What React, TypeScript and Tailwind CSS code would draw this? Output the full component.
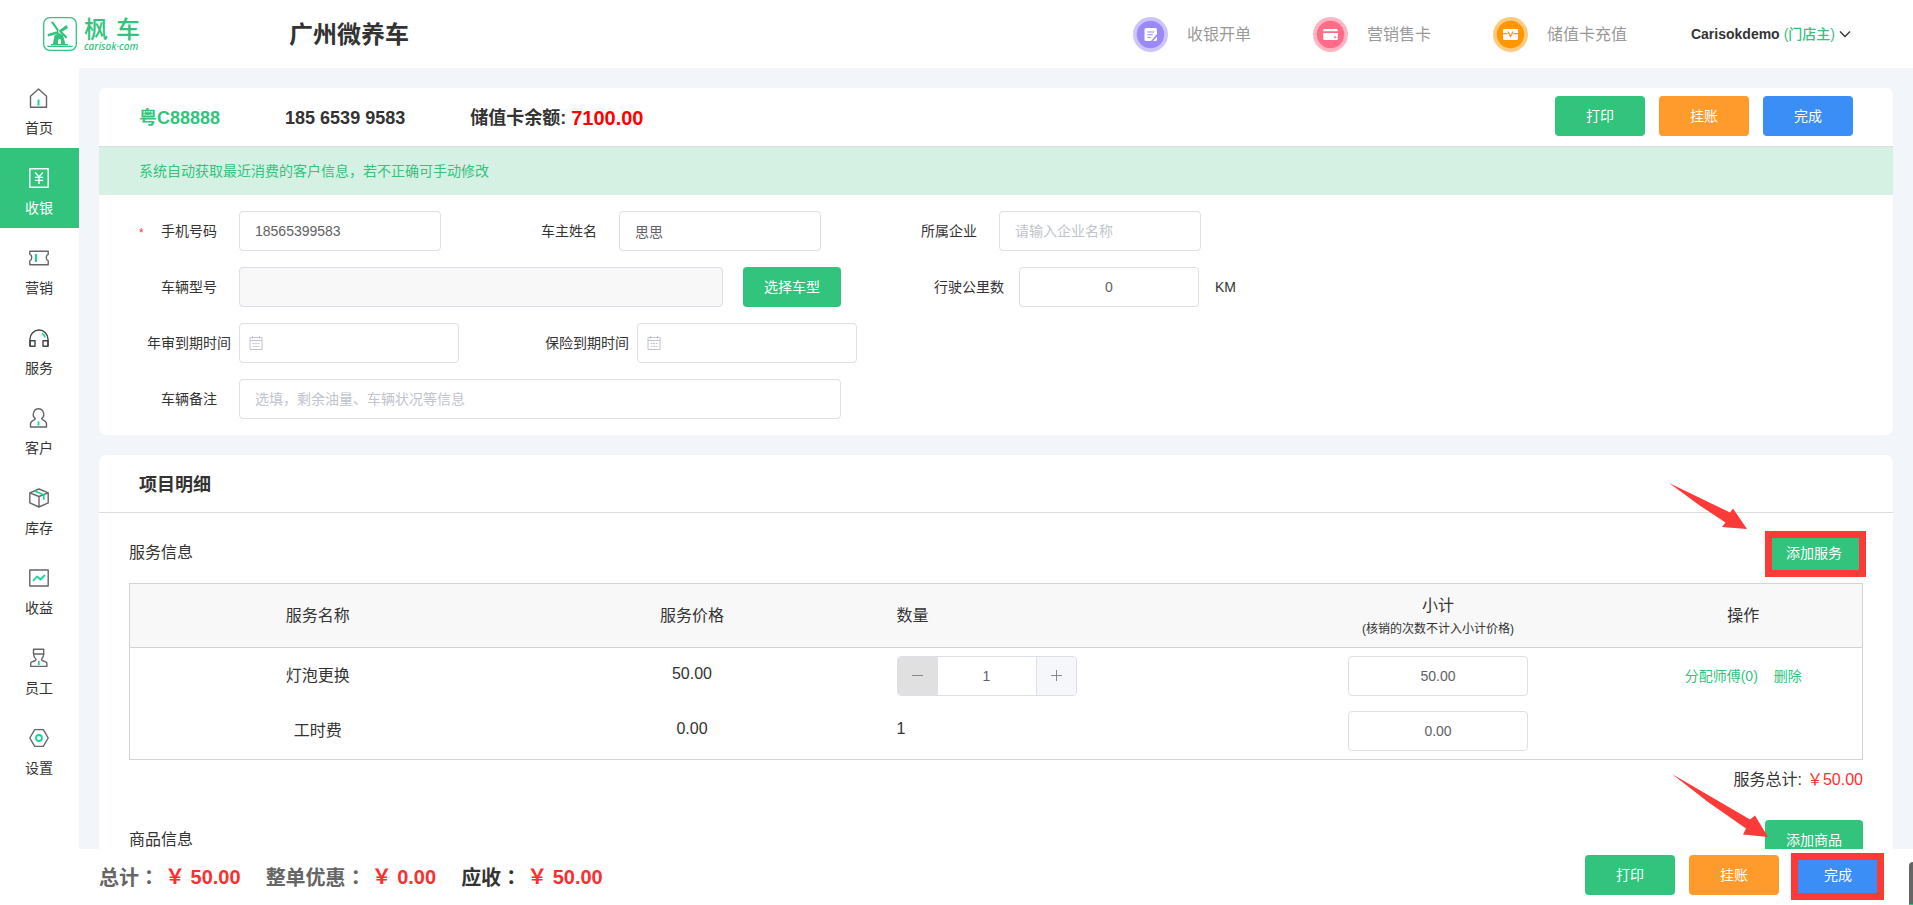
import React from "react";

const sans = "font-['Liberation_Sans','Noto_Sans_CJK_SC',sans-serif]";
const inputBase =
  "h-10 rounded border border-[#dcdfe6] bg-white text-sm text-[#606266] outline-none placeholder:text-[#c0c4cc]";

type IconProps = { children: React.ReactNode; color?: string };

function NavSvg({ children, color = "#666" }: IconProps) {
  return (
    <svg
      viewBox="0 0 20 20"
      className="h-5 w-5"
      fill="none"
      stroke={color}
      strokeWidth="1.4"
      strokeLinejoin="round"
      aria-hidden="true"
    >
      {children}
    </svg>
  );
}

const accent = "#15d59b";

const navItems = [
  {
    label: "首页",
    icon: (
      <NavSvg>
        <path d="M1.500 8.200 9.500.9 17.500 8.200v11h-16z" />
        <path d="M9.500 11.500v6" stroke={accent} strokeWidth="2" />
      </NavSvg>
    ),
  },
  {
    label: "收银",
    active: true,
    icon: (
      <NavSvg color="#fff">
        <rect x=".8" y=".8" width="18.4" height="18.4" />
        <path d="M6.2 4.5 10 9l3.8-4.5M10 9v7M5.8 9.4h8.4M5.8 12.4h8.4" />
      </NavSvg>
    ),
  },
  {
    label: "营销",
    icon: (
      <NavSvg>
        <path d="M.8 3.200h18.400v3.200c-2.600.8-2.600 5.600 0 6.400v4H.8v-4c2.600-.8 2.600-5.600 0-6.400z" />
        <path d="M7 6v8" stroke={accent} strokeWidth="2" />
      </NavSvg>
    ),
  },
  {
    label: "服务",
    icon: (
      <NavSvg color="#444">
        <path d="M1 18.3V11a9 9 0 0 1 18 0v7.3" />
        <path d="M1 12.8h5v5.5H1zM14 12.8h5v5.5h-5z" />
        <path d="M13 5.2c1.700 1 2.700 2.600 3 4.300" stroke={accent} strokeWidth="1.600" />
      </NavSvg>
    ),
  },
  {
    label: "客户",
    icon: (
      <NavSvg>
        <path d="M6.300 10.600C3.900 8.500 4 5.500 5 3.500c1.800-3.600 7.200-3.600 9 0 1 2 1.100 5-1.300 7.100 0 1.800 4.800 1.500 4.800 5.400V19h-16v-3c0-3.900 4.800-3.600 4.800-5.400z" />
        <path d="M9.500 13.500v4" stroke={accent} strokeWidth="1.800" />
      </NavSvg>
    ),
  },
  {
    label: "库存",
    icon: (
      <NavSvg>
        <path d="M10 1 19.200 4.800v10L10 19 .8 14.800v-10zM.8 4.800 10 8.500l9.200-3.700M10 8.500V19" />
        <path d="M5.500 3l9.300 3.800v5" stroke={accent} strokeWidth="1.600" />
      </NavSvg>
    ),
  },
  {
    label: "收益",
    icon: (
      <NavSvg>
        <rect x=".8" y="2" width="18.400" height="16" />
        <path d="M4 13l4-4.500 3.500 3L16 7" stroke={accent} strokeWidth="1.800" />
      </NavSvg>
    ),
  },
  {
    label: "员工",
    icon: (
      <NavSvg>
        <path d="M4.500 1.200h10.200v4.600c0 2-1 4.200-2.200 5.400l.6 1.300 4 1.600c.6.300.8.800.8 1.500v2.800H1.700v-2.800c0-.7.200-1.200.8-1.500l4-1.600.6-1.300C5.500 10 4.500 7.800 4.500 5.800zM4 6h11.500" />
        <path d="M9.800 13v4" stroke={accent} strokeWidth="1.800" />
      </NavSvg>
    ),
  },
  {
    label: "设置",
    icon: (
      <NavSvg>
        <path d="M5.700 1.600h8.600L19.200 10l-4.900 8.400H5.700L.8 10z" />
        <circle cx="10" cy="10" r="3" stroke={accent} strokeWidth="1.800" />
      </NavSvg>
    ),
  },
];

function Logo() {
  return (
    <a href="#" aria-label="枫车 carisok.com" className="flex items-center gap-[7px] text-[#32c37d]">
      <svg viewBox="0 0 34 34" className="h-[34px] w-[34px]" fill="none" stroke="currentColor" aria-hidden="true">
        <rect x=".7" y=".7" width="32.600" height="32.600" rx="6" strokeWidth="1.300" />
        <path
          d="M7.500 4.500 10.500 5 16 13l-1.500 1.500zM16 13.500l7.500-5.500 1.500 3L17 16zM15 14l-10.500 3 .5 2.500L16 16.500zM16 14.500l2-1 6.500 6.500-1.500 1.500z"
          fill="currentColor"
          stroke="none"
        />
        <path
          d="M11.500 18.500l4.500-2.500 4 2 2.500 9.500H18v-4a1.500 1.500 0 0 0-3 0v4H9.800z"
          fill="currentColor"
          stroke="none"
        />
        <path d="M4.500 29.300h25M8 27.700h17" strokeWidth="1.200" />
      </svg>
      <span className="flex flex-col gap-0.5">
        <span className="flex gap-2 font-['Noto_Sans_CJK_SC',sans-serif] text-2xl leading-[22px] font-medium">
          <span>枫</span>
          <span>车</span>
        </span>
        <span className="font-['Noto_Sans',sans-serif] text-[10px] leading-[10px] font-medium italic">carisok·com</span>
      </span>
    </a>
  );
}

function Badge({ fill, ring, children }: { fill: string; ring: string; children: React.ReactNode }) {
  return (
    <svg viewBox="0 0 35 35" className="h-[35px] w-[35px]" aria-hidden="true">
      <circle cx="17.500" cy="17.500" r="17.500" fill={ring} />
      <circle cx="17.500" cy="17.500" r="13.700" fill={fill} />
      {children}
    </svg>
  );
}

const quickLinks = [
  {
    label: "收银开单",
    icon: (
      <Badge fill="#9b89fa" ring="#cdc4fc">
        <path
          d="M13 11h9.500a1.500 1.500 0 0 1 1.500 1.500V17l-6 7h-5a1.500 1.500 0 0 1-1.500-1.500v-10A1.500 1.500 0 0 1 13 11z"
          fill="#fff"
        />
        <path d="M24 19.500V22.500a1.500 1.500 0 0 1-1.500 1.500H20z" fill="#fff" />
        <path d="M14.300 15h7M14.300 17.700h5.500M14.300 20.400h3.500" stroke="#9b89fa" strokeWidth="1" />
      </Badge>
    ),
  },
  {
    label: "营销售卡",
    icon: (
      <Badge fill="#ff6c87" ring="#ffb5c3">
        <path
          d="M11.500 12h12a1.300 1.300 0 0 1 1.300 1.300v1H10.200v-1a1.300 1.300 0 0 1 1.300-1.300zM10.200 16h14.600v5.700a1.300 1.300 0 0 1-1.300 1.300h-12a1.300 1.300 0 0 1-1.300-1.300z"
          fill="#fff"
        />
        <circle cx="22" cy="20.300" r="1" fill="#ff6c87" />
      </Badge>
    ),
  },
  {
    label: "储值卡充值",
    icon: (
      <Badge fill="#ff9602" ring="#ffca80">
        <rect x="10" y="12" width="15" height="11" rx="1.300" fill="#fff" />
        <path
          d="M10 16.700h4.500M20.500 16.700H25M15 14.500l2.500 5 2.500-5"
          fill="none"
          stroke="#ff9602"
          strokeWidth="1.300"
        />
      </Badge>
    ),
  },
];

const buttonTones = {
  green: "bg-[#32c37d]",
  orange: "bg-[#ff9a2c]",
  blue: "bg-[#3a8ef5]",
};

function Button({
  tone,
  wide,
  children,
}: {
  tone: keyof typeof buttonTones;
  wide?: boolean;
  children: React.ReactNode;
}) {
  return (
    <button
      type="button"
      className={`h-10 rounded text-sm text-white ${wide ? "w-[98px]" : "w-[90px]"} ${buttonTones[tone]}`}
    >
      {children}
    </button>
  );
}

function Field({
  id,
  label,
  width,
  required,
  children,
}: {
  id: string;
  label: string;
  width: string;
  required?: boolean;
  children: React.ReactNode;
}) {
  return (
    <div className={`flex items-center ${width}`}>
      <label htmlFor={id} className="relative w-[100px] shrink-0 text-center">
        {required && <span className="absolute top-1 left-0 text-xs text-[#ff3b38]">*</span>}
        {label}
      </label>
      {children}
    </div>
  );
}

function DateInput({ id }: { id: string }) {
  return (
    <div className="relative">
      <input id={id} className={`${inputBase} w-[220px] pr-4 pl-8`} />
      <svg
        viewBox="0 0 14 14"
        className="pointer-events-none absolute top-[13px] left-[10px] h-3.5 w-3.5"
        fill="none"
        stroke="#c0c4cc"
        aria-hidden="true"
      >
        <path d="M1 1.500h12v12H1zM1 4.500h12M3.500 0v2.500M10.500 0v2.500" />
        <path d="M3.500 7.500h7M3.500 10.500h7" strokeDasharray="1.800 .8" />
      </svg>
    </div>
  );
}

function Arrow({ className, points, w, h }: { className: string; points: string; w: number; h: number }) {
  return (
    <svg
      viewBox={`0 0 ${w} ${h}`}
      width={w}
      height={h}
      className={`pointer-events-none absolute ${className}`}
      aria-hidden="true"
    >
      <polygon points={points} fill="#fc3a38" />
    </svg>
  );
}

function Total({ label, value, strong }: { label: string; value: string; strong?: boolean }) {
  return (
    <div className="flex gap-1.5">
      <span className={strong ? "text-[#333]" : "text-[#666]"}>
        {label}
        <span className="font-['Noto_Sans_CJK_TC',sans-serif]">：</span>
      </span>
      <span className="text-[#fc2f2f]">￥ {value}</span>
    </div>
  );
}

export default function App() {
  return (
    <div className={`flex h-screen flex-col overflow-hidden bg-white text-sm text-[#333] ${sans}`}>
      <header className="flex h-[68px] shrink-0 items-center pr-[62px] pl-[43px]">
        <div className="w-[246px]">
          <Logo />
        </div>
        <h1 className="pt-0.5 text-2xl font-bold">广州微养车</h1>
        <nav className="mr-16 ml-auto flex items-center gap-[62px] text-base text-[#999]">
          {quickLinks.map((l) => (
            <a key={l.label} href="#" className="flex items-center gap-[19px]">
              {l.icon}
              <span className="pt-0.5">{l.label}</span>
            </a>
          ))}
        </nav>
        <button type="button" className="flex items-center gap-1 text-sm">
          <span className="font-bold">Carisokdemo</span>
          <span className="font-medium text-[#32c37d]">(门店主)</span>
          <svg viewBox="0 0 12 12" className="h-3 w-3" fill="none" stroke="#333" strokeWidth="1.300" aria-hidden="true">
            <path d="M1 3.500l5 5 5-5" />
          </svg>
        </button>
      </header>

      <div className="flex min-h-0 flex-1">
        <nav className="w-[79px] shrink-0">
          {navItems.map((n) => (
            <a
              key={n.label}
              href="#"
              className={`flex h-20 flex-col items-center gap-[10px] pt-5 pr-px leading-5 ${n.active ? "bg-[#32c37d] text-white" : ""}`}
            >
              {n.icon}
              {n.label}
            </a>
          ))}
        </nav>

        <main className="flex min-w-0 flex-1 flex-col gap-5 overflow-hidden bg-[#f2f6fb] px-5 pt-5">
          <section className="shrink-0 rounded-lg bg-white">
            <div className="flex h-[59px] items-center justify-between border-b border-[#ddd] px-10">
              <div className="flex items-center pt-0.5 text-lg font-bold">
                <span className="mr-[65px] text-[#32c37d]">粤C88888</span>
                <span className="mr-[65px]">185 6539 9583</span>
                <span className="mr-[5px]">储值卡余额:</span>
                <span className="text-xl text-[#f00]">7100.00</span>
              </div>
              <div className="mb-0.5 flex gap-3.5">
                <Button tone="green">打印</Button>
                <Button tone="orange">挂账</Button>
                <Button tone="blue">完成</Button>
              </div>
            </div>
            <p className="flex h-12 items-center bg-[#d5f1e4] px-10 text-[#32c37d]">
              系统自动获取最近消费的客户信息，若不正确可手动修改
            </p>
            <form className="flex flex-col gap-4 px-10 py-4">
              <div className="flex">
                <Field id="phone" label="手机号码" width="w-[380px]" required>
                  <input id="phone" defaultValue="18565399583" className={`${inputBase} w-[202px] px-[15px]`} />
                </Field>
                <Field id="owner" label="车主姓名" width="w-[380px]">
                  <input id="owner" defaultValue="思思" className={`${inputBase} w-[202px] px-[15px]`} />
                </Field>
                <Field id="company" label="所属企业" width="w-[380px]">
                  <input id="company" placeholder="请输入企业名称" className={`${inputBase} w-[202px] px-[15px]`} />
                </Field>
              </div>
              <div className="flex items-center">
                <Field id="model" label="车辆型号" width="mr-5">
                  <input
                    id="model"
                    disabled
                    className="h-10 w-[484px] rounded border border-[#dcdfe6] bg-[#f8f8f8] px-[15px]"
                  />
                </Field>
                <Button tone="green" wide>
                  选择车型
                </Button>
                <Field id="mileage" label="行驶公里数" width="mr-4 ml-[78px]">
                  <input id="mileage" defaultValue="0" className={`${inputBase} w-[180px] text-center`} />
                </Field>
                KM
              </div>
              <div className="flex gap-[78px]">
                <Field id="inspection" label="年审到期时间" width="">
                  <DateInput id="inspection" />
                </Field>
                <Field id="insurance" label="保险到期时间" width="">
                  <DateInput id="insurance" />
                </Field>
              </div>
              <Field id="remark" label="车辆备注" width="">
                <input
                  id="remark"
                  placeholder="选填，剩余油量、车辆状况等信息"
                  className={`${inputBase} w-[602px] px-[15px]`}
                />
              </Field>
            </form>
          </section>

          <section className="shrink-0 rounded-lg bg-white">
            <h2 className="flex h-[58px] items-center border-b border-[#ddd] px-10 pt-0.5 text-lg font-bold">
              项目明细
            </h2>
            <div className="px-[30px] pt-5 text-base">
              <div className="mb-[10px] flex items-center justify-between">
                <h3>服务信息</h3>
                <div className="relative">
                  <Button tone="green" wide>
                    添加服务
                  </Button>
                  <div className="pointer-events-none absolute -top-0.5 -right-[3px] -bottom-1 left-0 border-[7px] border-[#fc3a38]" />
                  <Arrow
                    className="-top-[50px] -left-24"
                    w={78}
                    h={46}
                    points="0,0 61,29.500 64,25.500 78,46 53,44 56.500,39.500 30,22"
                  />
                </div>
              </div>

              <table className="w-full table-fixed border-collapse border border-[#d3d3d3]">
                <colgroup>
                  <col className="w-[376px]" />
                  <col />
                  <col />
                  <col />
                  <col className="w-[238px]" />
                </colgroup>
                <thead>
                  <tr className="h-16 border-b border-[#d3d3d3] bg-[#f8f8f8]">
                    <th className="font-normal">服务名称</th>
                    <th className="font-normal">服务价格</th>
                    <th className="pl-[18px] text-left font-normal">数量</th>
                    <th className="font-normal">
                      <div className="pt-0.5 leading-6">小计</div>
                      <div className="text-xs leading-[22px]">(核销的次数不计入小计价格)</div>
                    </th>
                    <th className="font-normal">操作</th>
                  </tr>
                </thead>
                <tbody className="text-center">
                  <tr className="h-14">
                    <td>灯泡更换</td>
                    <td className="pb-1">50.00</td>
                    <td className="pl-[18px]">
                      <div className="flex h-10 w-[180px] overflow-hidden rounded border border-[#dcdfe6] text-sm">
                        <button
                          type="button"
                          aria-label="减少数量"
                          className="flex w-10 items-center justify-center bg-[#e0e0e0]"
                        >
                          <svg viewBox="0 0 11 11" className="h-[11px] w-[11px]" stroke="#888" aria-hidden="true">
                            <path d="M0 5.500h11" />
                          </svg>
                        </button>
                        <input
                          aria-label="灯泡更换数量"
                          defaultValue="1"
                          className="min-w-0 flex-1 text-center text-[#606266] outline-none"
                        />
                        <button
                          type="button"
                          aria-label="增加数量"
                          className="flex w-10 items-center justify-center border-l border-[#dcdfe6] bg-[#f5f7fa]"
                        >
                          <svg viewBox="0 0 11 11" className="h-[11px] w-[11px]" stroke="#888" aria-hidden="true">
                            <path d="M0 5.500h11M5.500 0v11" />
                          </svg>
                        </button>
                      </div>
                    </td>
                    <td>
                      <input
                        aria-label="灯泡更换小计"
                        defaultValue="50.00"
                        className={`${inputBase} w-[180px] text-center`}
                      />
                    </td>
                    <td className="text-sm text-[#32c37d]">
                      <a href="#">分配师傅(0)</a>
                      <a href="#" className="ml-4">
                        删除
                      </a>
                    </td>
                  </tr>
                  <tr className="h-14">
                    <td>工时费</td>
                    <td className="pb-1">0.00</td>
                    <td className="pb-1 pl-[18px] text-left">1</td>
                    <td>
                      <input
                        aria-label="工时费小计"
                        defaultValue="0.00"
                        className={`${inputBase} w-[180px] text-center`}
                      />
                    </td>
                    <td />
                  </tr>
                </tbody>
              </table>

              <p className="mb-5 flex h-10 items-center justify-end gap-[5px]">
                <span>服务总计:</span>
                <span className="text-[#fc2f2f]">￥50.00</span>
              </p>

              <div className="flex items-center justify-between">
                <h3>商品信息</h3>
                <div className="relative">
                  <Button tone="green" wide>
                    添加商品
                  </Button>
                  <Arrow
                    className="-top-[46px] -left-[93px]"
                    w={96}
                    h={63}
                    points="0,0 78,45.500 83,41.500 96,63 71,60.500 74,54.500 36,28"
                  />
                </div>
              </div>
            </div>
          </section>
        </main>
      </div>

      <footer className="relative flex h-14 shrink-0 items-center pr-[30px] pl-[99px] text-xl font-bold">
        <div className="flex gap-[25px]">
          <Total label="总计" value="50.00" />
          <Total label="整单优惠" value="0.00" />
          <Total label="应收" value="50.00" strong />
        </div>
        <div className="mb-1 ml-auto flex gap-3.5 font-normal">
          <Button tone="green">打印</Button>
          <Button tone="orange">挂账</Button>
          <div className="relative flex">
            <Button tone="blue">完成</Button>
            <div className="pointer-events-none absolute -top-0.5 -right-px -bottom-[5px] -left-0.5 border-[7px] border-[#fc3a38]" />
          </div>
        </div>
        <div className="absolute right-0 bottom-0 h-[43px] w-1 rounded-tl border-b border-[#32c37d] bg-[#666]" />
      </footer>
    </div>
  );
}
